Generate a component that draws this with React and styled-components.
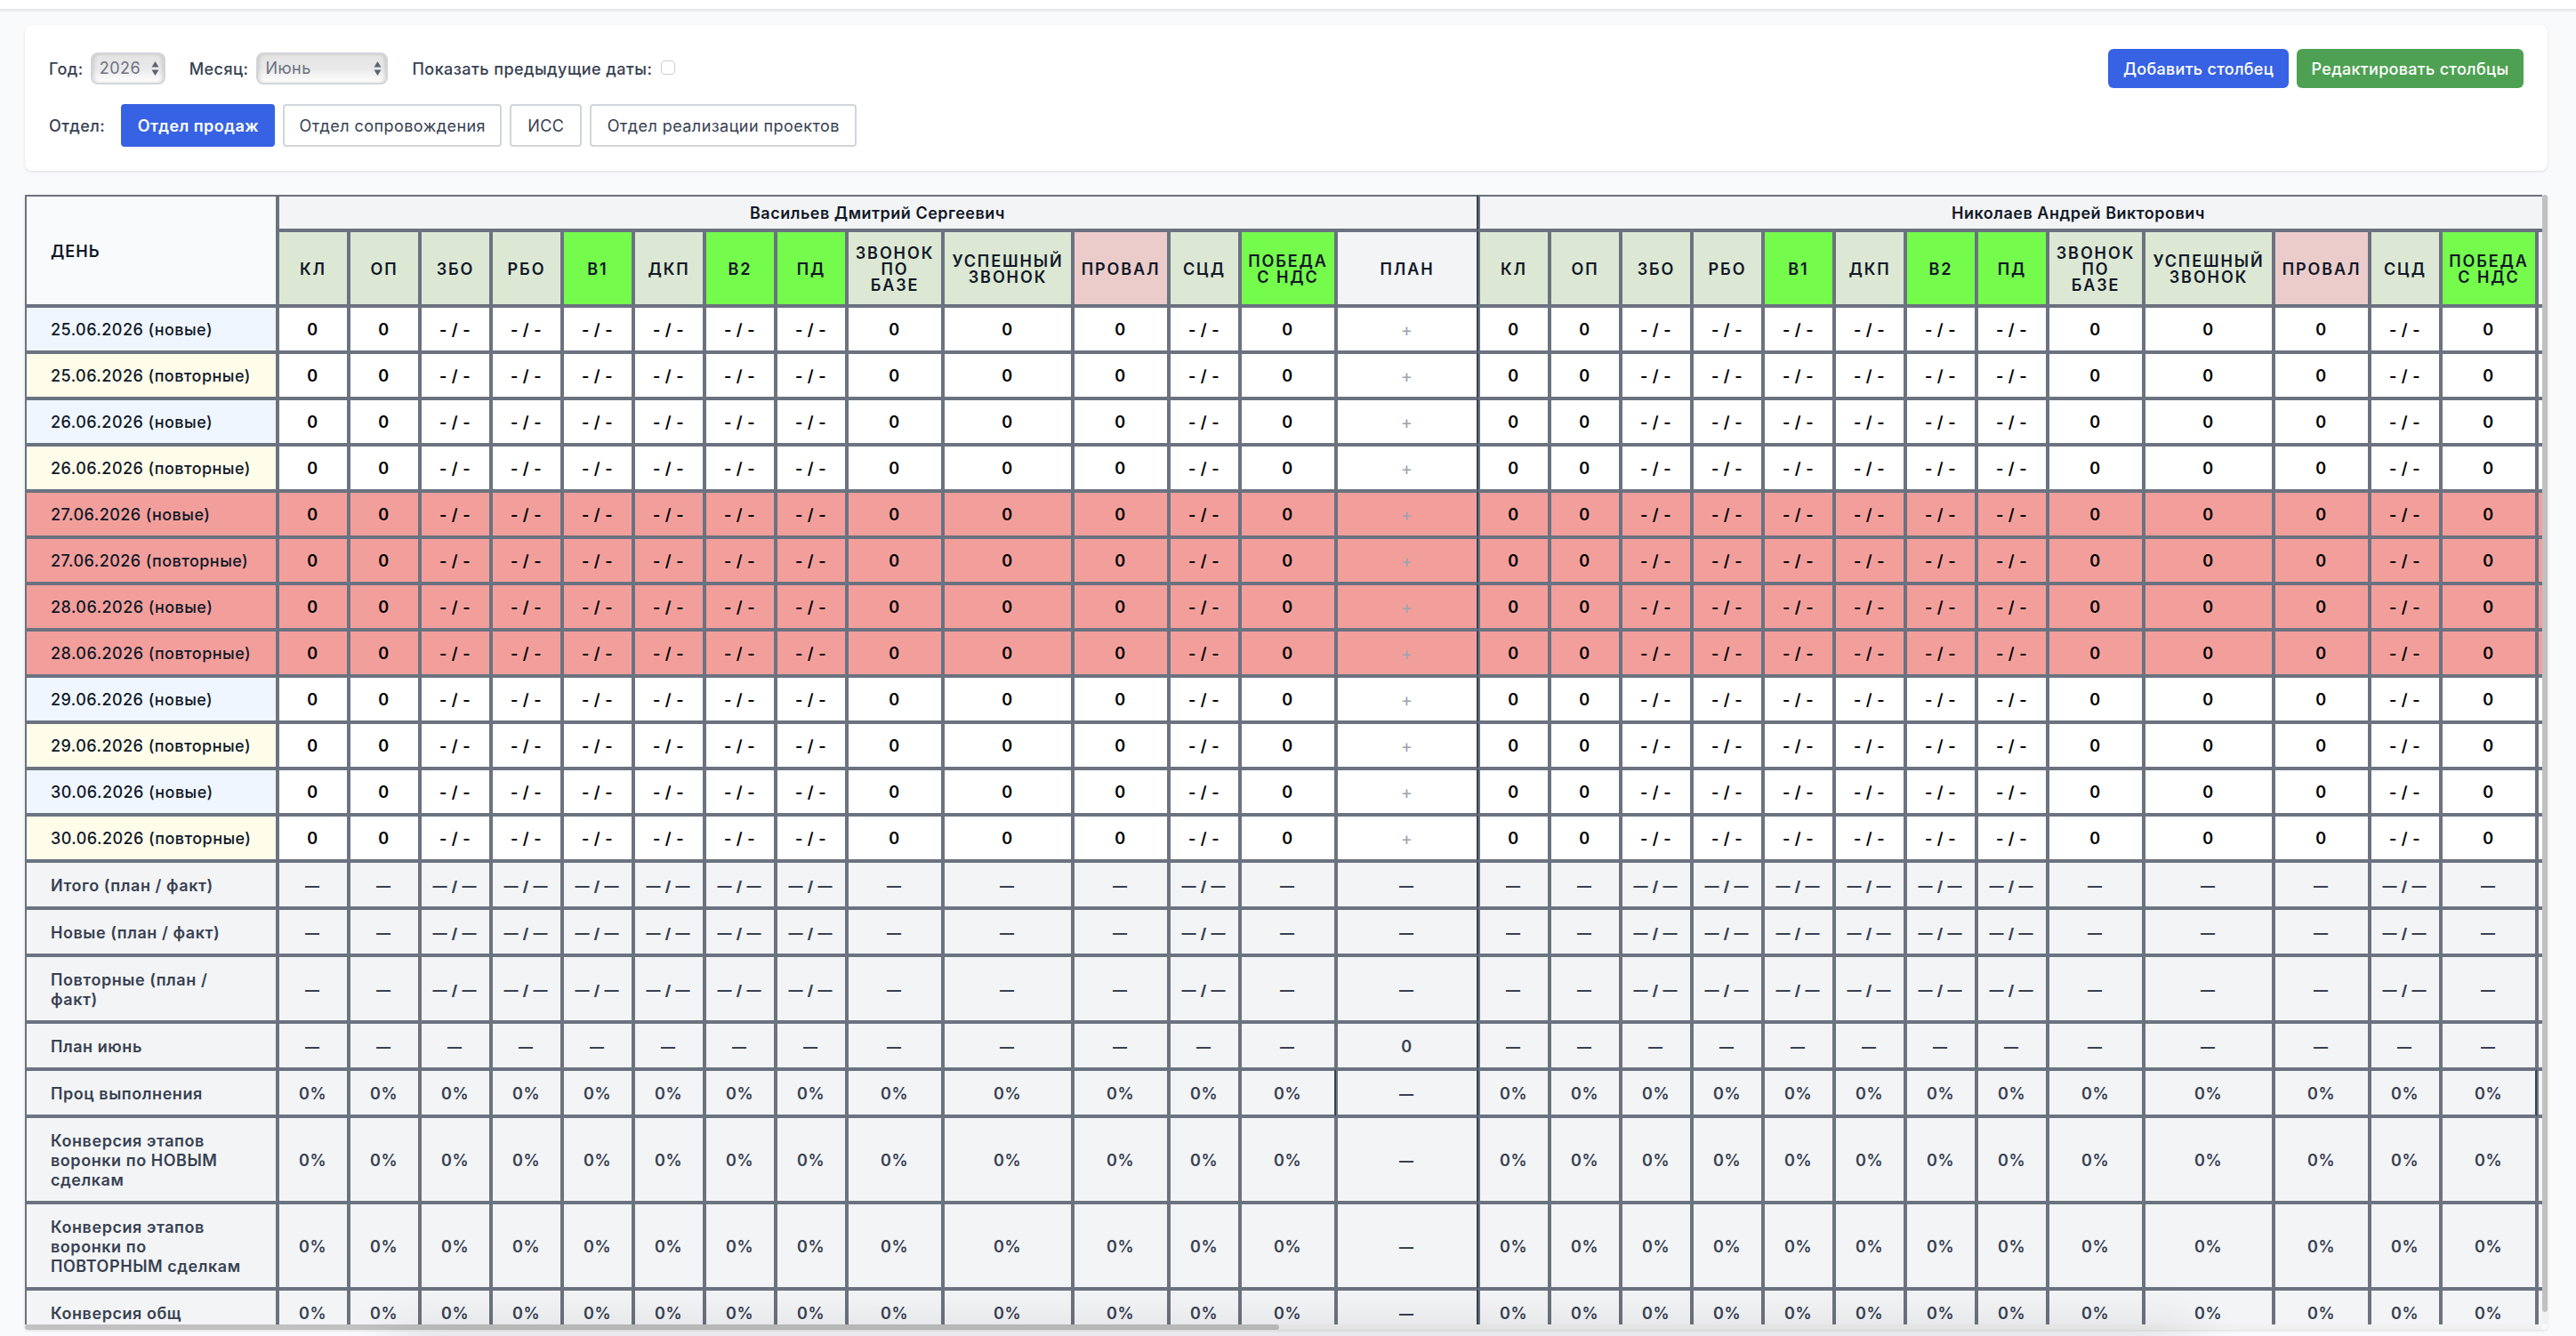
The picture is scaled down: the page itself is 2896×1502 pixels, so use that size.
import React from "react";
import styled, { createGlobalStyle } from "styled-components";

const Global = createGlobalStyle`
  * { box-sizing: border-box; }
  html, body { margin: 0; overflow: hidden; }
  body { background: #f9fafb; font-family: Inter, "Liberation Sans", sans-serif; color: #111827; }
`;

const Page = styled.div`
  position: relative;
  height: 1502px;
  overflow: hidden;
  display: flex;
  flex-direction: column;
`;
const DockShade = styled.div`
  position: absolute;
  left: 440px;
  right: 430px;
  top: 1502px;
  height: 80px;
  box-shadow: 0 0 64px rgba(0, 0, 0, 0.14);
  pointer-events: none;
`;
const TopBar = styled.div`
  flex: none;
  height: 12px;
  background: #fff;
  border-bottom: 2px solid #e5e7eb;
  box-shadow: 0 1px 2px rgba(0, 0, 0, 0.04);
`;
const Main = styled.main`
  padding: 16px 32px 0 28px;
  display: flex;
  flex-direction: column;
  gap: 27px;
`;
const Card = styled.section`
  height: 164px;
  padding: 27px 27px 0;
  background: #fff;
  border-radius: 8px;
  box-shadow: 0 1px 3px rgba(0, 0, 0, 0.12);
  display: flex;
  flex-direction: column;
  gap: 18px;
`;
const Line = styled.div`
  display: flex;
  align-items: center;
  justify-content: space-between;
  height: ${(p) => p.$h}px;
`;
const Group = styled.div`
  display: flex;
  align-items: center;
  gap: ${(p) => p.$gap}px;
`;
const Label = styled.span`
  font-size: 18px;
  font-weight: 500;
  letter-spacing: 0.45px;
  color: #374151;
  white-space: nowrap;
`;
const SelectBox = styled.div`
  width: ${(p) => p.$w}px;
  height: 36px;
  display: flex;
  align-items: center;
  justify-content: space-between;
  padding: 0 5px 1px 8px;
  border: 2px solid #d1d5db;
  border-radius: 8px;
  background: linear-gradient(#e4e4e4, #e9e9e9 50%, #fff);
  box-shadow: inset 3px 0 5px -2px rgba(0, 0, 0, 0.16), inset -3px 0 5px -2px rgba(0, 0, 0, 0.16);
  color: #6b7280;
  font-size: 18px;
  letter-spacing: 0.45px;
`;
const Check = styled.span`
  width: 16px;
  height: 16px;
  margin: 0 0 3px 2px;
  border: 1px solid #cfcfcf;
  border-radius: 4px;
  background: #fff;
`;
const Button = styled.button`
  height: 44px;
  width: ${(p) => p.$w}px;
  padding: 1px 0 0;
  border: 0;
  border-radius: 6px;
  background: ${(p) => p.$bg};
  color: #fff;
  font: 500 18px Inter, "Liberation Sans", sans-serif;
  letter-spacing: 0.3px;
  white-space: nowrap;
`;
const Tab = styled.button`
  height: 48px;
  width: ${(p) => p.$w}px;
  padding: 0;
  border: 2px solid ${(p) => (p.$on ? "#3762e3" : "#d1d5db")};
  border-radius: 4px;
  background: ${(p) => (p.$on ? "#3762e3" : "#fff")};
  color: ${(p) => (p.$on ? "#fff" : "#374151")};
  font: ${(p) => (p.$on ? 600 : 400)} 18px Inter, "Liberation Sans", sans-serif;
  letter-spacing: 0.45px;
  white-space: nowrap;
`;

const Board = styled.section`
  width: 2836px;
  height: 1276px;
  display: grid;
  grid-template-columns: 2830px 6px;
  grid-template-rows: 1270px 6px;
  box-shadow: 0 1px 3px rgba(0, 0, 0, 0.12);
  border-radius: 3px;
`;
const Viewport = styled.div`
  overflow: hidden;
`;
const Track = styled.div`
  background: #f1f1f1;
  border-radius: 3px;
`;
const Thumb = styled.div`
  width: ${(p) => p.$w}px;
  height: ${(p) => p.$h}px;
  border-radius: 3px;
  background: #c1c1c1;
`;
const Table = styled.table`
  width: 2984px;
  table-layout: fixed;
  border-collapse: separate;
  border-spacing: 0;
`;
const Row = styled.tr`
  height: ${(p) => p.$h}px;
`;
const Cell = styled.td`
  padding: ${(p) => p.$top ?? 2}px 1px 0 0;
  border: 2px solid #6b7280;
  border-right-color: ${(p) => (p.$edge ? "#374151" : "#6b7280")};
  background: ${(p) => p.$bg || "#fff"};
  color: ${(p) => p.$color || "#000"};
  font-size: ${(p) => p.$size || 18}px;
  font-weight: ${(p) => p.$weight || 600};
  line-height: 22px;
  letter-spacing: ${(p) => p.$ls ?? 0.5}px;
  text-align: center;
  white-space: nowrap;
`;
const DayCell = styled(Cell)`
  padding: ${(p) => p.$top ?? 2}px 14px 0 27px;
  text-align: left;
  white-space: pre-line;
`;
const HeadCell = styled(Cell)`
  color: #111827;
  line-height: 18px;
  letter-spacing: 1.9px;
  padding: 3px 0 0;
  white-space: pre-line;
`;

const Arrows = () => (
  <svg width="9" height="18" viewBox="0 0 9 18" fill="#5d6470">
    <path d="M4.5 1 8.5 7.5h-8zM4.5 17 8.5 10.5h-8z" />
  </svg>
);

const SAGE = "#dce8d4";
const LIME = "#75fb4c";
const COLS = [
  ["КЛ", 80, SAGE],
  ["ОП", 80, SAGE],
  ["ЗБО", 80, SAGE, 1],
  ["РБО", 80, SAGE, 1],
  ["В1", 80, LIME, 1],
  ["ДКП", 80, SAGE, 1],
  ["В2", 80, LIME, 1],
  ["ПД", 80, LIME, 1],
  ["ЗВОНОК\nПО\nБАЗЕ", 108, SAGE],
  ["УСПЕШНЫЙ\nЗВОНОК", 146, SAGE],
  ["ПРОВАЛ", 108, "#ebcccb"],
  ["СЦД", 80, SAGE, 1],
  ["ПОБЕДА\nС НДС", 108, LIME],
  ["ПЛАН", 160, "#f3f4f6"],
];
const PEOPLE = [
  { name: "Васильев Дмитрий Сергеевич", plan: true },
  { name: "Николаев Андрей Викторович", plan: false },
];
const DAYS = [25, 26, 27, 28, 29, 30].flatMap((d) => [
  { label: `${d}.06.2026 (новые)`, bg: "#eff6ff", off: d === 27 || d === 28 },
  { label: `${d}.06.2026 (повторные)`, bg: "#fefdea", off: d === 27 || d === 28 },
]);
const TOTALS = [
  { label: "Итого (план / факт)", h: 53, kind: "pair" },
  { label: "Новые (план / факт)", h: 53, kind: "pair" },
  { label: "Повторные (план /\nфакт)", h: 75, kind: "pair" },
  { label: "План июнь", h: 53, kind: "plan" },
  { label: "Проц выполнения", h: 53, kind: "pct", edge: true },
  { label: "Конверсия этапов\nворонки по НОВЫМ\nсделкам", h: 97, kind: "pct" },
  { label: "Конверсия этапов\nворонки по\nПОВТОРНЫМ сделкам", h: 97, kind: "pct" },
  { label: "Конверсия общ", h: 53, kind: "pct" },
];
const totalText = (kind, col, last) => {
  if (kind === "pct") return last ? "—" : "0%";
  if (kind === "plan") return last ? "0" : "—";
  return col[3] ? "— / —" : "—";
};

const TotalCell = ({ total, col, last, hidden }) => {
  const text = totalText(total.kind, col, last);
  const dash = text.startsWith("—");
  return (
    <Cell
      $top={3}
      $bg="#f3f4f6"
      $color="#374151"
      $edge={last || (total.edge && col === COLS[12])}
      $size={dash ? 16 : 18}
      $weight={dash ? 800 : 600}
      $ls={dash ? 0.9 : 0.5}
    >
      {hidden ? null : text}
    </Cell>
  );
};

export default function App() {
  return (
    <Page>
      <Global />
      <TopBar />
      <Main>
        <Card>
          <Line $h={44}>
            <Group $gap={27}>
              <Group $gap={8}>
                <Label>Год:</Label>
                <SelectBox $w={84}>2026<Arrows /></SelectBox>
              </Group>
              <Group $gap={9}>
                <Label>Месяц:</Label>
                <SelectBox $w={148}>Июнь<Arrows /></SelectBox>
              </Group>
              <Group $gap={8}>
                <Label>Показать предыдущие даты:</Label>
                <Check />
              </Group>
            </Group>
            <Group $gap={9}>
              <Button $w={203} $bg="#3762e3">Добавить столбец</Button>
              <Button $w={255} $bg="#4ea153">Редактировать столбцы</Button>
            </Group>
          </Line>
          <Line $h={48}>
            <Group $gap={18}>
              <Label>Отдел:</Label>
              <Group $gap={9}>
                <Tab $on $w={173}>Отдел продаж</Tab>
                <Tab $w={246}>Отдел сопровождения</Tab>
                <Tab $w={81}>ИСС</Tab>
                <Tab $w={300}>Отдел реализации проектов</Tab>
              </Group>
            </Group>
          </Line>
        </Card>
        <Board>
          <Viewport>
            <Table>
              <colgroup>
                <col style={{ width: 284 }} />
                {PEOPLE.map((p) => COLS.map((c) => <col key={p.name + c[0]} style={{ width: c[1] }} />))}
              </colgroup>
              <thead>
                <Row $h={40}>
                  <DayCell as="th" rowSpan={2} $top={3} $bg="#f9fafb" $color="#111827" $ls={1}>ДЕНЬ</DayCell>
                  {PEOPLE.map((p) => (
                    <Cell as="th" key={p.name} colSpan={14} $edge $bg="#f3f4f6" $color="#111827">{p.name}</Cell>
                  ))}
                </Row>
                <Row $h={85}>
                  {PEOPLE.map((p) =>
                    COLS.map((c, i) => (
                      <HeadCell as="th" key={p.name + c[0]} $bg={c[2]} $edge={i === 13}>
                        {i === 13 && !p.plan ? null : c[0]}
                      </HeadCell>
                    ))
                  )}
                </Row>
              </thead>
              <tbody>
                {DAYS.map((d) => (
                  <Row key={d.label} $h={52}>
                    <DayCell $bg={d.off ? "#f29f9c" : d.bg} $color="#111827" $weight={500} $ls={0.45}>{d.label}</DayCell>
                    {PEOPLE.map((p) =>
                      COLS.map((c, i) => (
                        <Cell
                          key={p.name + c[0]}
                          $bg={d.off ? "#f29f9c" : "#fff"}
                          $edge={i === 13}
                          $color={i === 13 ? "#9ca3af" : "#000"}
                          $weight={i === 13 ? 400 : 600}
                          $size={i === 13 ? 20 : 18}
                        >
                          {i === 13 ? (p.plan ? "+" : null) : c[3] ? "- / -" : "0"}
                        </Cell>
                      ))
                    )}
                  </Row>
                ))}
                {TOTALS.map((t) => (
                  <Row key={t.label} $h={t.h}>
                    <DayCell $top={3} $bg="#f3f4f6" $color="#374151" $weight={600} $ls={0.55}>{t.label}</DayCell>
                    {PEOPLE.map((p) =>
                      COLS.map((c, i) => (
                        <TotalCell key={p.name + c[0]} total={t} col={c} last={i === 13} hidden={i === 13 && !p.plan} />
                      ))
                    )}
                  </Row>
                ))}
              </tbody>
            </Table>
          </Viewport>
          <Track><Thumb $w={6} $h={1256} /></Track>
          <Track><Thumb $w={1410} $h={6} /></Track>
        </Board>
      </Main>
      <DockShade />
    </Page>
  );
}
